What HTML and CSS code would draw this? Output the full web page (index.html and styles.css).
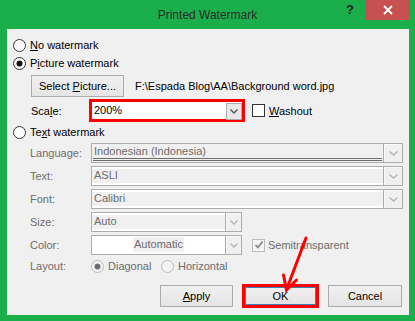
FILE: index.html
```html
<!DOCTYPE html>
<html>
<head>
<meta charset="utf-8">
<link rel="stylesheet" href="styles.css">
</head>
<body>
<div class="titlebar">
  <div></div>
  <div class="title">Printed Watermark</div>
  <div class="controls">
    <span class="help">?</span>
    <span class="close"><svg width="10" height="10" viewBox="0 0 10 10"><path d="M1 1 L9 9 M9 1 L1 9" stroke="#fff" stroke-width="1.8" fill="none"/></svg></span>
  </div>
</div>
<div class="panel">
  <div class="radio-row"><span class="radio"></span><span><u>N</u>o watermark</span></div>
  <div class="radio-row"><span class="radio checked"></span><span>P<u>i</u>cture watermark</span></div>
  <div class="pic-row"><button class="btn select-btn">Select <u>P</u>icture...</button><span class="path">F:\Espada Blog\AA\Background word.jpg</span></div>
  <div class="scale-row">
    <span class="slabel">Sca<u>l</u>e:</span>
    <div class="redbox">
      <div class="combo">
        <span class="cval">200%</span>
        <span class="carr"><svg width="8" height="5" viewBox="0 0 8 5"><path d="M0.5 0.5 L4 4 L7.5 0.5" stroke="#555" stroke-width="1.4" fill="none"/></svg></span>
      </div>
    </div>
    <span class="check"></span><span class="ctext"><u>W</u>ashout</span>
  </div>
  <div class="radio-row tw"><span class="radio"></span><span>Te<u>x</u>t watermark</span></div>
  <div class="frow first">
    <span class="flabel">Language:</span>
    <div class="field wide lang">
      <span class="ftxt"><span class="dbl">Indonesian (Indonesia)</span></span>
      <span class="farr big"><svg width="9" height="5" viewBox="0 0 9 5"><path d="M0.5 0.5 L4.5 4 L8.5 0.5" stroke="#b5b5b5" stroke-width="1.4" fill="none"/></svg></span>
    </div>
  </div>
  <div class="frow">
    <span class="flabel">Text:</span>
    <div class="field wide banded">
      <span class="ftxt">ASLI</span>
      <span class="farr big"><svg width="9" height="5" viewBox="0 0 9 5"><path d="M0.5 0.5 L4.5 4 L8.5 0.5" stroke="#b5b5b5" stroke-width="1.4" fill="none"/></svg></span>
    </div>
  </div>
  <div class="frow">
    <span class="flabel">Font:</span>
    <div class="field wide banded">
      <span class="ftxt">Calibri</span>
      <span class="farr big"><svg width="9" height="5" viewBox="0 0 9 5"><path d="M0.5 0.5 L4.5 4 L8.5 0.5" stroke="#b5b5b5" stroke-width="1.4" fill="none"/></svg></span>
    </div>
  </div>
  <div class="frow">
    <span class="flabel">Size:</span>
    <div class="field narrow banded">
      <span class="ftxt">Auto</span>
      <span class="farr"><svg width="8" height="5" viewBox="0 0 8 5"><path d="M0.5 0.5 L4 4 L7.5 0.5" stroke="#b5b5b5" stroke-width="1.4" fill="none"/></svg></span>
    </div>
  </div>
  <div class="frow">
    <span class="flabel">Color:</span>
    <div class="field narrow colorf">
      <span class="ftxt center"><span class="hl">Automatic</span></span>
      <span class="farr"><svg width="8" height="5" viewBox="0 0 8 5"><path d="M0.5 0.5 L4 4 L7.5 0.5" stroke="#b5b5b5" stroke-width="1.4" fill="none"/></svg></span>
    </div>
    <span class="check disabled"><svg width="10" height="10" viewBox="0 0 10 10"><path d="M1.5 5 L4 7.5 L8.5 1.5" stroke="#8a8a8a" stroke-width="1.8" fill="none"/></svg></span><span class="ctext gray semi">Semitransparent</span>
  </div>
  <div class="frow layout">
    <span class="flabel">Layout:</span>
    <span class="opt opt-first"><span class="radio dis checked"></span><span class="gray">Diagonal</span></span>
    <span class="opt"><span class="radio dis"></span><span class="gray">Horizontal</span></span>
  </div>
  <div class="btn-row">
    <button class="btn apply"><u>A</u>pply</button>
    <div class="redbox okbox"><button class="btn ok">OK</button></div>
    <button class="btn cancel">Cancel</button>
  </div>
</div>
<svg class="pointer" width="415" height="321" viewBox="0 0 415 321">
  <path d="M306 238 L287.5 287" stroke="#f00" stroke-width="3" fill="none" stroke-linecap="round"/>
  <path d="M283.5 275 L286.5 290 L296.5 280" stroke="#f00" stroke-width="3" fill="none" stroke-linejoin="miter" stroke-linecap="round"/>
</svg>
</body>
</html>
```
FILE: styles.css
```css
body {
  margin: 0;
  width: 415px;
  height: 321px;
  background: #1aaf4b;
  font-family: "Liberation Sans", Arial, sans-serif;
  font-size: 11px;
  color: #000;
  overflow: hidden;
  position: relative;
}

u { text-decoration: underline; text-underline-offset: 1px; }

.titlebar {
  height: 29px;
  display: grid;
  grid-template-columns: 1fr auto 1fr;
}
.title {
  font-size: 12px;
  line-height: 14px;
  padding-top: 8px;
  color: #2b2b2b;
}
.controls {
  display: flex;
  justify-content: flex-end;
  align-items: flex-start;
  padding-right: 5px;
}
.help {
  font-weight: bold;
  font-size: 13px;
  line-height: 14px;
  margin-top: 3px;
  margin-right: 11px;
  color: #222;
}
.close {
  width: 45px;
  height: 20px;
  background: #c75050;
  display: flex;
  align-items: center;
  justify-content: center;
}

.panel {
  margin: 0 6px 0 7px;
  height: 286px;
  background: #f0f0f0;
  padding: 7px 0 0 6px;
  box-sizing: border-box;
  display: flex;
  flex-direction: column;
}

.radio-row {
  height: 18px;
  display: flex;
  align-items: center;
  gap: 4px;
}
.radio-row.tw { margin-top: 1px; }

.radio {
  width: 13px;
  height: 13px;
  border-radius: 50%;
  border: 1px solid #333;
  box-sizing: border-box;
  background: #fff;
  display: flex;
  align-items: center;
  justify-content: center;
  flex: none;
}
.radio.checked::after {
  content: "";
  width: 5px;
  height: 5px;
  border-radius: 50%;
  background: #111;
  box-shadow: 0 0 0 0.6px #333;
}
.radio.dis {
  border-color: #bcbcbc;
  background: #f4f4f4;
}
.radio.dis.checked::after {
  background: #6d6d6d;
  box-shadow: 0 0 0 0.6px #888;
}

.pic-row {
  margin-top: 3px;
  height: 22px;
  display: flex;
  align-items: center;
  padding-left: 18px;
}
.btn {
  height: 22px;
  border: 1px solid #acacac;
  background: linear-gradient(#f0f0f0, #e5e5e5);
  font: inherit;
  color: #000;
  padding: 0;
  box-sizing: border-box;
}
.select-btn { width: 93px; }
.path { margin-left: 11px; }

.scale-row {
  margin-top: 2px;
  height: 23px;
  display: flex;
  align-items: center;
  padding-left: 18px;
}
.slabel { width: 58px; }
.redbox {
  border: 3px solid #f00;
  box-sizing: border-box;
  width: 156px;
  height: 23px;
  background: #fff;
}
.combo {
  display: flex;
  height: 17px;
  background: #fff;
}
.cval {
  flex: 1;
  padding-left: 2px;
  line-height: 17px;
}
.carr {
  width: 16px;
  height: 17px;
  margin-top: 1px;
  box-sizing: border-box;
  border: 1px solid #adadad;
  background: #e8e8e8;
  display: flex;
  align-items: center;
  justify-content: center;
}
.check {
  width: 13px;
  height: 13px;
  border: 1px solid #333;
  box-sizing: border-box;
  background: #fff;
  margin-left: 7px;
  flex: none;
  display: flex;
  align-items: center;
  justify-content: center;
}
.check.disabled {
  margin-left: 10px;
  border-color: #bcbcbc;
  background: #f4f4f4;
}
.ctext { margin-left: 4px; }
.ctext.semi { margin-left: 3px; }
.gray { color: #6d6d6d; }

.frow {
  display: flex;
  align-items: center;
  height: 20px;
  margin-top: 3px;
}
.frow.first { margin-top: 2px; }
.flabel {
  width: 61px;
  padding-left: 17px;
  color: #6d6d6d;
  flex: none;
}
.field {
  height: 20px;
  border: 1px solid #adadad;
  box-sizing: border-box;
  display: flex;
  background: #f0f0f0;
  color: #6d6d6d;
}
.field.wide { width: 312px; }
.field.narrow { width: 151px; }
.field.banded {
  box-shadow: inset 0 2px #fff, inset 0 -2px #fff;
}
.field.colorf { background: #fff; }
.ftxt {
  flex: 1;
  padding-left: 2px;
  line-height: 17px;
  overflow: hidden;
}
.lang .ftxt { padding-left: 1px; padding-right: 1px; }
.dbl {
  display: block;
  border-bottom: 3px double #6d6d6d;
  line-height: 14px;
  height: 14px;
  padding-left: 1px;
}
.ftxt.center {
  text-align: center;
  padding: 1px 0 0 0;
  line-height: 14px;
}
.hl {
  display: inline-block;
  background: #f0f0f0;
  padding: 0 1px;
  line-height: 15px;
}
.farr {
  width: 16px;
  box-sizing: border-box;
  border-left: 1px solid #adadad;
  background: #f0f0f0;
  box-shadow: inset 1px 1px #fafafa;
  display: flex;
  align-items: center;
  justify-content: center;
}
.farr.big { width: 19px; }

.frow.layout {
  margin-top: 2px;
  height: 18px;
}
.opt {
  display: flex;
  align-items: center;
  gap: 4px;
}
.opt-first { width: 70px; }

.btn-row {
  margin-top: 9px;
  height: 24px;
  display: flex;
  align-items: center;
  justify-content: flex-end;
  padding-right: 7px;
}
.apply { width: 73px; }
.okbox {
  width: 77px;
  height: 24px;
  margin: 0 9px;
  background: none;
}
.ok {
  width: 71px;
  height: 18px;
  border-color: #3c7fb1;
  display: block;
}
.cancel { width: 74px; }

.pointer {
  position: absolute;
  left: 0;
  top: 0;
  pointer-events: none;
}
```
